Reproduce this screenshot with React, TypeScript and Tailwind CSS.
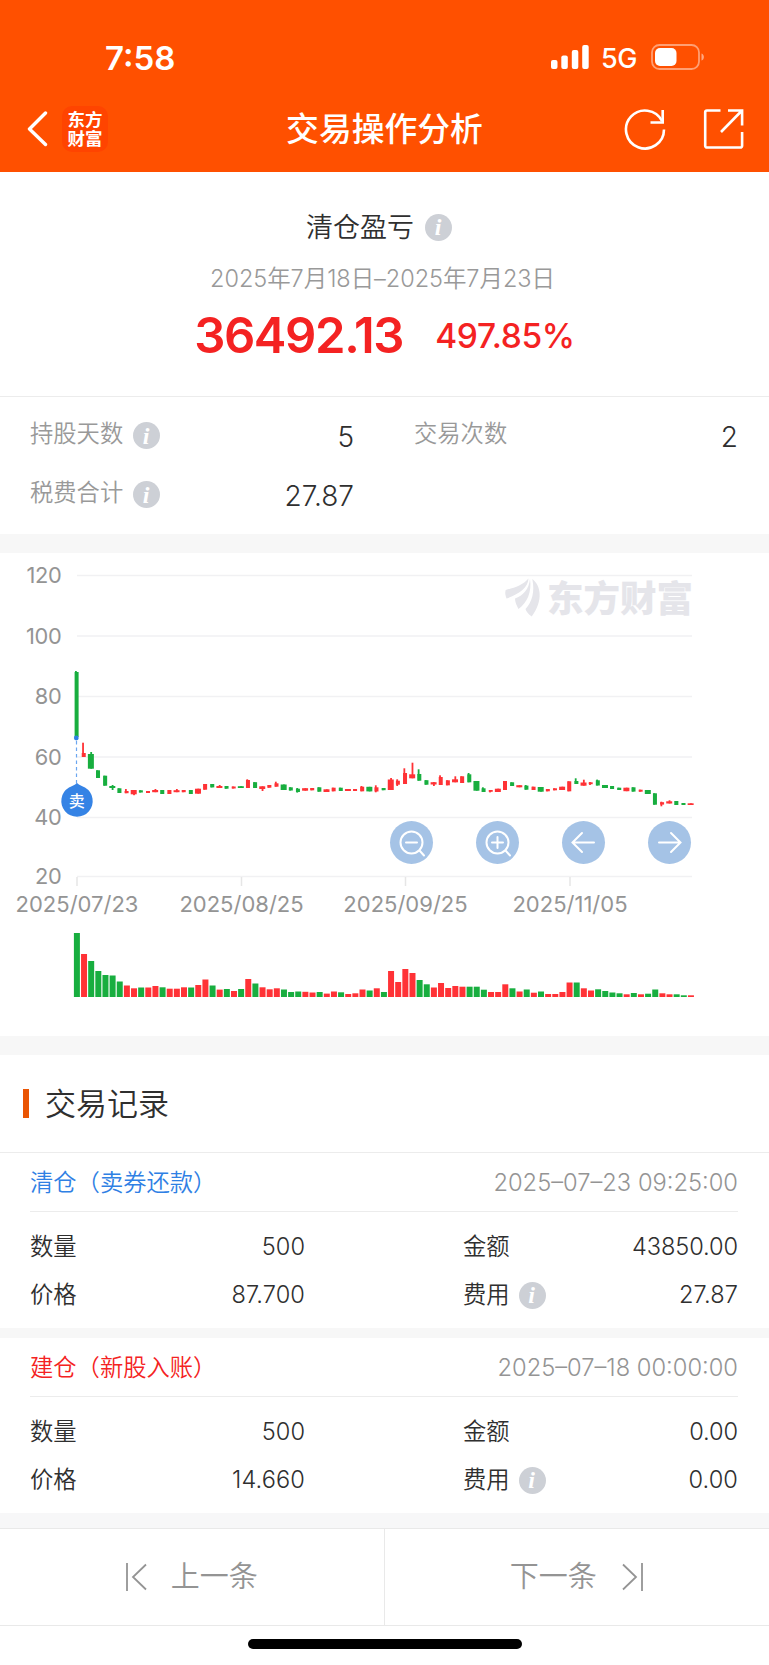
import type { ReactNode } from "react";

type Side = "r" | "g";

// [颜色, 实体顶, 实体底, 成交量, 上影线, 下影线]，y 值为图表坐标
type Bar = [Side, number, number, number, number?, number?];

const BARS: Bar[] = [
  ["g", 672, 737, 64, 671], ["r", 753, 757, 43, 742.7], ["g", 754, 768.7, 36, 752],
  ["g", 770.3, 778, 26], ["g", 775.7, 785.7, 22], ["g", 786, 788, 21.5, 785, 790],
  ["g", 788.3, 793, 15.5], ["r", 791, 793.2, 11.5, 789], ["r", 790, 794.3, 8.7, 790, 795.2],
  ["g", 790.3, 792.5, 9.5], ["r", 791, 793, 9.5], ["r", 790, 792.2, 11, 789],
  ["g", 790, 794, 9.7], ["r", 790, 794, 8.3], ["r", 790.2, 792.2, 8.3, 789],
  ["r", 790, 792.2, 9.7], ["g", 790, 794, 9.5], ["r", 788.7, 793.7, 12],
  ["r", 784, 789.7, 17.5], ["g", 784, 787.4, 11.5], ["r", 786, 788, 7.4, 785],
  ["g", 786, 788.7, 8], ["r", 786.5, 788.5, 6], ["g", 786.2, 788, 8],
  ["r", 780, 788, 18, 779.3], ["g", 782.2, 788, 13.5], ["r", 786.3, 789, 9.7, 786.3, 791],
  ["r", 785, 787.7, 7.7], ["r", 783.3, 786.7, 8.7, 781.7], ["g", 784.5, 790, 7.5],
  ["g", 787.3, 790.5, 5], ["g", 788.7, 792, 5.5, 788, 792.6], ["r", 788.2, 790.7, 5.2],
  ["r", 788, 790.3, 4.5], ["g", 787.3, 791.7, 5], ["r", 789.3, 792, 3.4],
  ["r", 787.7, 791.3, 5.5], ["g", 787.7, 791, 4.7], ["r", 789, 791, 3],
  ["r", 789, 791, 3.7], ["r", 786.7, 791.3, 7.5, 786], ["g", 786.8, 791.4, 6.5],
  ["r", 787.3, 791.5, 8.7, 785.3, 792.3], ["g", 788, 790.2, 5], ["r", 779.5, 790, 26, 778],
  ["r", 780.7, 784.7, 15, 779.3, 786], ["r", 773, 784, 28, 768.3], ["r", 774.3, 778.3, 24, 762.7],
  ["g", 774, 780.7, 17, 769.3], ["g", 780.2, 784.7, 12.7], ["r", 782.2, 784.5, 9.5, 782, 786],
  ["r", 777, 785, 14, 775.3], ["r", 780.3, 785.3, 9], ["r", 779.3, 782.3, 11, 776.3],
  ["r", 776.3, 783, 10.3], ["g", 774.3, 782.3, 10.3, 773], ["g", 781, 790.7, 10.3],
  ["g", 788.3, 792, 7.3, 787.3], ["r", 790, 791.8, 5, 790, 792.4], ["r", 788.7, 792, 5],
  ["r", 781, 790, 12.7], ["g", 782.3, 786, 8.7], ["r", 785.2, 787.3, 5.5],
  ["g", 785.6, 789.7, 7.5, 785], ["r", 786.7, 790, 4.3], ["g", 787, 791.7, 5.5],
  ["r", 789, 791.3, 3], ["r", 788.3, 790.3, 3], ["r", 786.7, 790, 5],
  ["r", 781.3, 791.3, 14.5], ["g", 781, 784, 14.5, 778.3], ["r", 782.5, 785.7, 8.7, 779.7],
  ["r", 782.3, 784.2, 6.5, 782, 785], ["g", 780.3, 785.5, 7.7, 779.6], ["g", 785, 788, 6],
  ["g", 786, 789, 4.5], ["g", 787.7, 790, 3.7], ["r", 787.7, 791.2, 2.7],
  ["g", 787.3, 791.6, 4], ["r", 789.7, 791.7, 2.7], ["g", 790, 794, 3.3],
  ["g", 793.3, 804.7, 7.5], ["r", 802.2, 804.6, 3.7, 801.7, 806.3], ["r", 801.3, 803.5, 2.7, 800.3],
  ["g", 801, 805, 2.7], ["g", 803, 805, 1.7], ["r", 803.3, 805, 1.7],
];

const FILL: Record<Side, string> = { r: "#ff3236", g: "#18ae3f" };

const Y_AXIS = [
  { value: 120, y: 575.5 },
  { value: 100, y: 636 },
  { value: 80, y: 696.5 },
  { value: 60, y: 757 },
  { value: 40, y: 817.5 },
  { value: 20, y: 876.5 },
];

const X_AXIS = [
  { label: "2025/07/23", x: 77 },
  { label: "2025/08/25", x: 241.5 },
  { label: "2025/09/25", x: 405.5 },
  { label: "2025/11/05", x: 570 },
];

const RECORDS = [
  {
    title: "清仓（卖券还款）",
    tone: "text-[#2f80e4]",
    time: "2025–07–23 09:25:00",
    count: "500",
    amount: "43850.00",
    price: "87.700",
    fee: "27.87",
  },
  {
    title: "建仓（新股入账）",
    tone: "text-[#f42222]",
    time: "2025–07–18 00:00:00",
    count: "500",
    amount: "0.00",
    price: "14.660",
    fee: "0.00",
  },
];

function Info() {
  return (
    <span className="flex h-[27px] w-[27px] shrink-0 items-center justify-center rounded-full bg-[#cdd0d6] pr-px font-['Liberation_Serif',serif] text-[24px] leading-none font-bold text-white italic">
      i
    </span>
  );
}

function Header() {
  return (
    <header className="h-[172px] bg-[#ff5000] text-white">
      <div className="flex h-[87px] items-end justify-between pr-[64px] pl-[105px]">
        <span className="text-[33px] leading-[58px] font-semibold">7:58</span>
        <div className="flex h-[60px] items-center">
          <svg width="39" height="26" viewBox="0 0 39 26" fill="currentColor">
            <rect x="1" y="16" width="6.5" height="9" rx="2" />
            <rect x="11.3" y="11.5" width="6.5" height="13.5" rx="2" />
            <rect x="21.8" y="6" width="6.5" height="19" rx="2" />
            <rect x="32.2" y="1" width="6.5" height="24" rx="2" />
          </svg>
          <span className="ml-[12px] w-[38px] pt-[3px] text-[27px] leading-none font-medium tracking-[-0.4px]">5G</span>
          <svg className="ml-[12px]" width="54" height="26" viewBox="0 0 54 26" fill="none">
            <rect x="1" y="1" width="47" height="24" rx="7.5" stroke="#fff" strokeOpacity="0.45" strokeWidth="1.8" />
            <rect x="4" y="4" width="21.5" height="18" rx="5" fill="#fff" />
            <path d="M50.5 9.5c3.2 1 3.2 6 0 7z" fill="#fff" fillOpacity="0.5" />
          </svg>
        </div>
      </div>

      <div className="grid h-[84px] grid-cols-[1fr_auto_1fr] items-center">
        <div className="flex items-center pl-[27px]">
          <svg width="21" height="36" viewBox="0 0 21 36" fill="none" stroke="#fff" strokeWidth="3.4">
            <path d="M18.500 2 2.500 18l16 15.500" strokeLinecap="round" strokeLinejoin="round" />
          </svg>
          <div className="ml-[14px] flex h-[46px] w-[46px] flex-col items-center justify-center rounded-[10px] bg-[#ff4400] text-[17.5px] leading-[19px] font-bold">
            <span>东方</span>
            <span>财富</span>
          </div>
        </div>
        <h1 className="pt-px text-[32.8px] leading-none font-medium">交易操作分析</h1>
        <div className="flex items-center justify-end pr-[25px]">
          <svg width="42" height="42" viewBox="0 0 42 42" fill="none" stroke="#fff" strokeWidth="2.6">
            <path d="M40 21.500A19 19 0 1 1 38 13" />
            <path d="M38.700 2v12.500H26.500" />
          </svg>
          <svg className="ml-[37px]" width="41" height="42" viewBox="0 0 41 42" fill="none" stroke="#fff" strokeWidth="2.6">
            <path d="M17.500 2.500H4a1.800 1.800 0 0 0-1.800 1.800v33.400a1.800 1.800 0 0 0 1.800 1.800h33.300a1.800 1.800 0 0 0 1.800-1.800V24" />
            <path d="M25 2.500h14.100V17.500M39 2.500 18 24" />
          </svg>
        </div>
      </div>
    </header>
  );
}

function Summary() {
  return (
    <section className="flex h-[225px] flex-col items-center border-b border-[#ececec] pt-[37px]">
      <div className="flex items-center gap-[11px] pr-[11px]">
        <h2 className="pt-[2px] text-[27px] leading-[34px] font-[350]">清仓盈亏</h2>
        <Info />
      </div>
      <p className="mt-[17px] mr-[4px] text-[23.5px] leading-[34px] font-[350] tracking-[-0.05px] whitespace-nowrap text-[#999]">
        2025年7月18日–2025年7月23日
      </p>
      <div className="mt-[11px] flex items-center gap-[32px] text-[#f42222]">
        <span className="text-[49px] leading-[58px] font-semibold tracking-[-1.4px]">36492.13</span>
        <span className="text-[33.5px] leading-[58px] font-medium tracking-[-0.3px]">497.85%</span>
      </div>
    </section>
  );
}

function Stat({ label, value, info }: { label: string; value: string; info?: boolean }) {
  return (
    <div className="flex h-[59px] items-center">
      <span className="-mt-[3px] text-[23.3px] leading-none text-[#999]">{label}</span>
      {info ? <span className="ml-[10px]"><Info /></span> : null}
      <span className="ml-auto pt-[2px] text-[28px] leading-none">{value}</span>
    </div>
  );
}

function RoundButton({ label, children }: { label: string; children: ReactNode }) {
  return (
    <button type="button" aria-label={label} className="grid h-[43px] w-[43px] place-items-center rounded-full bg-[#a5c3e6]">
      <svg width="43" height="43" viewBox="0 0 43 43" fill="none" stroke="#fff" strokeWidth="2" strokeLinecap="round">
        {children}
      </svg>
    </button>
  );
}

function Chart() {
  return (
    <section className="relative h-[483px]">
      <svg className="block" width="769" height="483" viewBox="0 553 769 483">
        {Y_AXIS.map((row) => (
          <g key={row.value}>
            <path d={`M77 ${row.y}H692`} stroke="#f1f1f3" strokeWidth="1.5" />
            <text x="61.500" y={row.y + 7.5} textAnchor="end" fontSize="21.800" fontWeight="375" letterSpacing="-0.300" fill="#949494">
              {row.value}
            </text>
          </g>
        ))}
        {X_AXIS.map((col) => (
          <g key={col.label}>
            <path d={`M${col.x} 877v9`} stroke="#e6e6e6" strokeWidth="1.5" />
            <text x={col.x} y="911.500" textAnchor="middle" fontSize="22" fontWeight="375" fill="#949494">
              {col.label}
            </text>
          </g>
        ))}

        {/* 水印 */}
        <g fill="#e5e5ea">
          <path d="M505.700 590C514 588 523 585 528.500 578.500 528 588 519 594 506.500 598.500 505 594 505 593 505.700 590z" />
          <path d="M530 579c2 13-3 24-11.500 30-2.500-5-3.300-7-3.500-10.500C523 596 529 589 530 579z" />
          <path d="M532.300 579c8.200 6 11.700 21-.6 37.500-4-3-5.500-5-6.200-7.500 6.500-7 9.500-17 6.800-30z" />
          <text x="547" y="612" fontSize="36.500" fontWeight="900">东方财富</text>
        </g>

        {/* K 线与成交量 */}
        {BARS.map(([side, top, bottom, volume, high = top, low = bottom], i) => {
          const cx = 76.9 + i * 7.14;
          const w = i % 3 === 2 ? 6 : 4;
          const wickX = i % 3 === 2 ? cx : cx - 1;
          return (
            <g key={i} fill={FILL[side]}>
              <rect x={cx - w / 2 - 0.3} y={top} width={w} height={bottom - top} />
              <rect x={wickX - 0.9} y={high} width="1.8" height={low - high} />
              <rect x={cx - 3} y={997 - volume} width="6" height={volume} />
            </g>
          );
        })}

        {/* 卖出点 */}
        <path d="M76.500 741v43" stroke="#6ba6f0" strokeWidth="1.200" strokeDasharray="3.500 3" />
        <circle cx="76.300" cy="738" r="2.400" fill="#2f80e4" />
        <path d="M77 783c2.500 2.200 5 3.200 8 4.500a15.700 15.700 0 1 1-16 0c3-1.300 5.500-2.300 8-4.500z" fill="#3583e5" />
        <text x="76.800" y="806.700" textAnchor="middle" fontSize="16" fontWeight="500" fill="#fff">卖</text>
      </svg>

      <div className="absolute top-[268px] right-[78px] flex gap-[43px]">
        <RoundButton label="缩小">
          <circle cx="21.500" cy="21.500" r="11" />
          <path d="M16 21.500h11M29.500 29.500l4.500 5" />
        </RoundButton>
        <RoundButton label="放大">
          <circle cx="21.500" cy="21.500" r="11" />
          <path d="M16 21.500h11M21.500 16v11M29.500 29.500l4.500 5" />
        </RoundButton>
        <RoundButton label="向左">
          <path d="M32 21.500H11M20 12l-9.500 9.500L20 31" />
        </RoundButton>
        <RoundButton label="向右">
          <path d="M11 21.500h21M23 12l9.500 9.500L23 31" />
        </RoundButton>
      </div>
    </section>
  );
}

function Record({ record }: { record: (typeof RECORDS)[number] }) {
  return (
    <article className="pr-[31px] pl-[30px] text-[23.3px] leading-none font-[350]">
      <div className="flex h-[59px] items-center justify-between border-b border-[#ececec] pt-px">
        <span className={record.tone}>{record.title}</span>
        <span className="text-[23.7px] text-[#949494]">{record.time}</span>
      </div>
      <div className="grid grid-cols-[275px_275px] justify-between pt-[10px] pb-[9px]">
        <div className="flex h-[49px] items-center justify-between">
          <span>数量</span>
          <span className="text-[23.6px]">{record.count}</span>
        </div>
        <div className="flex h-[49px] items-center justify-between">
          <span>金额</span>
          <span className="text-[23.6px] tracking-[-0.1px]">{record.amount}</span>
        </div>
        <div className="flex h-[48px] items-center justify-between">
          <span>价格</span>
          <span className="text-[23.6px] tracking-[0.1px]">{record.price}</span>
        </div>
        <div className="flex h-[48px] items-center">
          <span className="mr-[9px]">费用</span>
          <Info />
          <span className="ml-auto text-[23.6px] tracking-[0.1px]">{record.fee}</span>
        </div>
      </div>
    </article>
  );
}

export default function App() {
  return (
    <main className="flex h-[1665px] w-[769px] flex-col overflow-hidden bg-white font-['Inter','Noto_Sans_CJK_SC',sans-serif] text-[#2f2f2f]">
      <Header />
      <Summary />

      <section className="grid h-[137px] grid-cols-[324px_324px] content-start justify-between pt-[9px] pr-[31px] pl-[30px] font-[350]">
        <Stat label="持股天数" value="5" info />
        <Stat label="交易次数" value="2" />
        <Stat label="税费合计" value="27.87" info />
      </section>
      <div className="h-[19px] bg-[#f7f7f7]" />

      <Chart />
      <div className="h-[19px] bg-[#f7f7f7]" />

      <div className="flex h-[98px] items-center border-b border-[#ececec] pl-[23px]">
        <span className="mr-[16px] h-[29px] w-[6px] bg-[#ea5504]" />
        <h2 className="text-[31px] leading-none font-[350]">交易记录</h2>
      </div>
      <Record record={RECORDS[0]} />
      <div className="h-[10px] bg-[#f7f7f7]" />
      <Record record={RECORDS[1]} />
      <div className="h-[15px] bg-[#f7f7f8]" />

      <nav className="grid h-[98px] grid-cols-2 border-y border-[#e9e9e9] text-[29px] font-[350] text-[#949494]">
        <button type="button" className="flex items-center justify-center gap-[24px] border-r border-[#e9e9e9] pr-px">
          <svg width="22" height="28" viewBox="0 0 22 28" fill="none" stroke="currentColor" strokeWidth="1.8">
            <path d="M2 0v28M21 1.500 8 14l13 12.500" />
          </svg>
          上一条
        </button>
        <button type="button" className="flex items-center justify-center gap-[25px]">
          下一条
          <svg width="22" height="28" viewBox="0 0 22 28" fill="none" stroke="currentColor" strokeWidth="1.8">
            <path d="M20 0v28M1 1.500 14 14 1 26.500" />
          </svg>
        </button>
      </nav>
      <div className="mx-auto mt-[13px] h-[10px] w-[274px] rounded-full bg-black" />
    </main>
  );
}
